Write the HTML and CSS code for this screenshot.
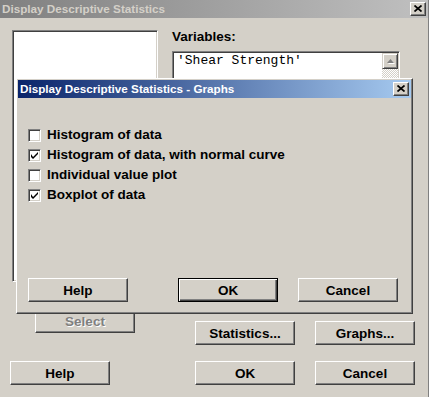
FILE: index.html
```html
<!DOCTYPE html>
<html>
<head>
<meta charset="utf-8">
<link rel="stylesheet" href="styles.css">
</head>
<body>
<div class="window">
  <div class="titlebar inactive">
    <span class="title">Display Descriptive Statistics</span>
    <span class="close"><svg width="8" height="7" viewBox="0 0 8 7"><path d="M0.5 0.5 L7.5 6.5 M7.5 0.5 L0.5 6.5" stroke="#000" stroke-width="1.7" fill="none"/></svg></span>
  </div>
  <div class="main">
    <div class="left">
      <div class="listbox"></div>
      <div class="btn disabled select">Select</div>
    </div>
    <div class="right">
      <div class="label">Variables:</div>
      <div class="textbox">
        <div class="tb-text">'Shear Strength'</div>
        <div class="scroll">
          <div class="sbtn"><svg width="7" height="4" viewBox="0 0 7 4"><path d="M3.5 0 L7 4 L0 4 Z" fill="#808080"/></svg></div>
          <div class="track"></div>
        </div>
      </div>
      <div class="btnrow mid">
        <div class="btn">Statistics...</div>
        <div class="btn">Graphs...</div>
      </div>
    </div>
  </div>
  <div class="btnrow bottom">
    <div class="btn">Help</div>
    <div class="btn ok">OK</div>
    <div class="btn">Cancel</div>
  </div>

  <div class="dialog">
    <div class="titlebar active">
      <span class="title">Display Descriptive Statistics - Graphs</span>
      <span class="close"><svg width="8" height="7" viewBox="0 0 8 7"><path d="M0.5 0.5 L7.5 6.5 M7.5 0.5 L0.5 6.5" stroke="#000" stroke-width="1.7" fill="none"/></svg></span>
    </div>
    <div class="checks">
      <div class="row"><span class="cb"></span><span class="lbl">Histogram of data</span></div>
      <div class="row"><span class="cb"><svg width="7" height="7" viewBox="0 0 7 7"><path d="M0 2 L0 5 L2 7 L7 2 L7 0 L2 5 Z" fill="#000"/></svg></span><span class="lbl">Histogram of data, with normal curve</span></div>
      <div class="row"><span class="cb"></span><span class="lbl">Individual value plot</span></div>
      <div class="row"><span class="cb"><svg width="7" height="7" viewBox="0 0 7 7"><path d="M0 2 L0 5 L2 7 L7 2 L7 0 L2 5 Z" fill="#000"/></svg></span><span class="lbl">Boxplot of data</span></div>
    </div>
    <div class="btnrow dlg">
      <div class="btn">Help</div>
      <div class="btn default">OK</div>
      <div class="btn">Cancel</div>
    </div>
  </div>
</div>
</body>
</html>
```
FILE: styles.css
```css
html, body {
  margin: 0;
  padding: 0;
  background: #d4d0c8;
}
body {
  font-family: "Liberation Sans", Arial, sans-serif;
  font-weight: bold;
  font-size: 13.5px;
  color: #000;
}
.window {
  position: relative;
  width: 428px;
  height: 397px;
  background: #d4d0c8;
  border-right: 1px solid #808080;
  overflow: hidden;
}
.titlebar {
  height: 18px;
  display: flex;
  align-items: center;
  justify-content: space-between;
  box-sizing: border-box;
}
.titlebar .title {
  font-size: 11.7px;
  line-height: 18px;
  padding-left: 2px;
  white-space: nowrap;
}
.titlebar.inactive {
  background: linear-gradient(to right, #808080, #c0c0c0);
  color: #d4d0c8;
}
.titlebar.active {
  background: linear-gradient(to right, #0a246a, #a6caf0);
  color: #fff;
}
.close {
  width: 16px;
  height: 14px;
  box-sizing: border-box;
  margin-right: 2px;
  background: #d4d0c8;
  border: 1px solid;
  border-color: #fff #404040 #404040 #fff;
  box-shadow: inset -1px -1px #808080;
  display: flex;
  align-items: center;
  justify-content: center;
}
.close svg { display: block; margin-top: -1px; }

.main {
  display: flex;
  padding: 12px 0 0 12px;
}
.left {
  width: 146px;
  display: flex;
  flex-direction: column;
}
.listbox {
  height: 252px;
  box-sizing: border-box;
  background: #fff;
  border: 1px solid;
  border-color: #808080 #fff #fff #808080;
  box-shadow: inset 1px 1px #404040, inset -1px -1px #d4d0c8;
}
.select {
  margin: 27px 0 0 23px;
}
.right {
  margin-left: 14px;
}
.label {
  line-height: 14px;
}
.textbox {
  margin-top: 7px;
  width: 228px;
  height: 110px;
  box-sizing: border-box;
  background: #fff;
  border: 1px solid;
  border-color: #808080 #fff #fff #808080;
  box-shadow: inset 1px 1px #404040, inset -1px -1px #d4d0c8;
  padding: 1px;
  display: flex;
}
.tb-text {
  flex: 1;
  font-family: "Liberation Mono", "Courier New", monospace;
  font-weight: normal;
  font-size: 13px;
  line-height: 14px;
  padding: 1px 0 0 3px;
}
.scroll {
  width: 16px;
  display: flex;
  flex-direction: column;
}
.sbtn {
  height: 16px;
  box-sizing: border-box;
  background: #d4d0c8;
  border: 1px solid;
  border-color: #d4d0c8 #404040 #404040 #d4d0c8;
  box-shadow: inset 1px 1px #fff, inset -1px -1px #808080;
  display: flex;
  align-items: center;
  justify-content: center;
}
.sbtn svg { display: block; filter: drop-shadow(1px 1px 0 #fff); }
.track {
  flex: 1;
  background: repeating-conic-gradient(#fff 0 25%, #d4d0c8 0 50%) 0 0 / 2px 2px;
}

.btnrow {
  display: flex;
}
.btn {
  width: 100px;
  height: 24px;
  box-sizing: border-box;
  padding-top: 1px;
  background: #d4d0c8;
  border: 1px solid;
  border-color: #fff #404040 #404040 #fff;
  box-shadow: inset -1px -1px #808080;
  display: flex;
  align-items: center;
  justify-content: center;
  line-height: 14px;
  white-space: nowrap;
}
.btn.disabled {
  color: #808080;
  text-shadow: 1px 1px 0 #fff;
}
.btn.default {
  border: 1px solid #000;
  box-shadow: inset 1px 1px #fff, inset -1px -1px #404040, inset -2px -2px #808080;
}
.mid {
  margin: 160px 0 0 23px;
  gap: 20px;
}
.bottom {
  margin-top: 16px;
  padding-left: 10px;
}
.bottom .ok { margin-left: 85px; margin-right: 20px; }

.dialog {
  position: absolute;
  left: 16px;
  top: 78px;
  width: 397px;
  height: 236px;
  box-sizing: border-box;
  background: #d4d0c8;
  border: 1px solid;
  border-color: #fff #404040 #404040 #fff;
  box-shadow: inset -1px -1px #808080;
  padding: 1px;
}
.checks {
  margin-top: 29px;
  padding-left: 10px;
}
.row {
  display: flex;
  align-items: flex-start;
  height: 20px;
}
.cb {
  width: 13px;
  height: 13px;
  margin-top: 2px;
  box-sizing: border-box;
  background: #fff;
  border: 1px solid;
  border-color: #808080 #fff #fff #808080;
  box-shadow: inset 1px 1px #404040, inset -1px -1px #d4d0c8;
  display: flex;
  align-items: center;
  justify-content: center;
}
.cb svg { display: block; }
.lbl {
  margin-left: 6px;
  margin-top: 1px;
  line-height: 14px;
  white-space: nowrap;
}
.dlg {
  margin-top: 71px;
  padding-left: 10px;
}
.dlg .default { margin-left: 50px; margin-right: 20px; }
```
